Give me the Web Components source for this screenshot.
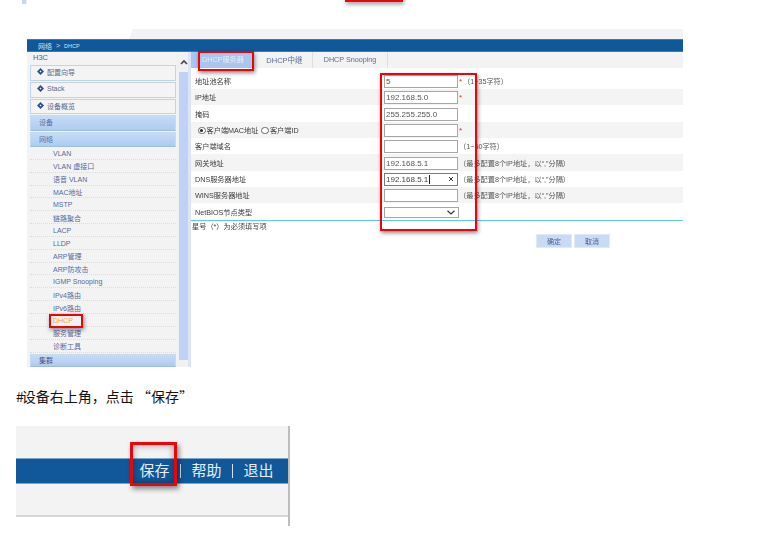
<!DOCTYPE html>
<html lang="zh">
<head>
<meta charset="utf-8">
<title>DHCP</title>
<style>
html,body{margin:0;background:#fff;width:757px;height:551px;overflow:hidden}
body{font-family:"Liberation Sans","Noto Sans CJK SC",sans-serif;font-size:7px;color:#333}
</style>
</head>
<body>
<x-strip></x-strip>
<x-router>
  <x-sidebar slot="side">
    <x-box>配置向导</x-box>
    <x-box>Stack</x-box>
    <x-box short>设备概览</x-box>
    <x-bar>设备</x-bar>
    <x-bar short>网络</x-bar>
    <x-item>VLAN</x-item>
    <x-item>VLAN 虚接口</x-item>
    <x-item>语音 VLAN</x-item>
    <x-item>MAC地址</x-item>
    <x-item>MSTP</x-item>
    <x-item>链路聚合</x-item>
    <x-item>LACP</x-item>
    <x-item>LLDP</x-item>
    <x-item>ARP管理</x-item>
    <x-item>ARP防攻击</x-item>
    <x-item>IGMP Snooping</x-item>
    <x-item>IPv4路由</x-item>
    <x-item>IPv6路由</x-item>
    <x-item active>DHCP</x-item>
    <x-item>服务管理</x-item>
    <x-item>诊断工具</x-item>
    <x-bar last>集群</x-bar>
  </x-sidebar>
  <x-tabs slot="tabs">
    <x-tab active>DHCP服务器</x-tab>
    <x-tab>DHCP中继</x-tab>
    <x-tab>DHCP Snooping</x-tab>
  </x-tabs>
  <x-row first><span slot="label">地址池名称</span><x-field>5</x-field><x-hint req>（1~35字符）</x-hint></x-row>
  <x-row alt><span slot="label">IP地址</span><x-field>192.168.5.0</x-field><x-hint req></x-hint></x-row>
  <x-row><span slot="label">掩码</span><x-field>255.255.255.0</x-field></x-row>
  <x-row alt><x-radios slot="label"></x-radios><x-field></x-field><x-hint req></x-hint></x-row>
  <x-row><span slot="label">客户端域名</span><x-field></x-field><x-hint>（1~50字符）</x-hint></x-row>
  <x-row alt><span slot="label">网关地址</span><x-field>192.168.5.1</x-field><x-hint>（最多配置8个IP地址，以“,”分隔）</x-hint></x-row>
  <x-row><span slot="label">DNS服务器地址</span><x-field focus>192.168.5.1</x-field><x-hint>（最多配置8个IP地址，以“,”分隔）</x-hint></x-row>
  <x-row alt><span slot="label">WINS服务器地址</span><x-field></x-field><x-hint>（最多配置8个IP地址，以“,”分隔）</x-hint></x-row>
  <x-row><span slot="label">NetBIOS节点类型</span><x-field select></x-field></x-row>
  <x-note>星号（*）为必须填写项</x-note>
  <x-actions><x-btn>确定</x-btn><x-btn>取消</x-btn></x-actions>
</x-router>
<x-caption><span style="letter-spacing:-2px">#</span>设备右上角，点击 “保存”</x-caption>
<x-savebar></x-savebar>

<script>
function def(name, html){
  customElements.define(name, class extends HTMLElement{
    constructor(){super();this.attachShadow({mode:'open'}).innerHTML=html;}
  });
}
const RED='position:absolute;box-sizing:border-box;border:3px solid #e8060c;box-shadow:1px 2px 4px rgba(0,0,0,.45);pointer-events:none;';

def('x-strip',`<style>
:host{display:block;position:relative;height:4px}
.a{width:4px;height:4px;margin-left:22px;background:#c9d5f3;border-right:1px solid #eee}
.r{${RED}left:345px;top:-2px;width:58px;height:4px;border-width:0 0 2px;border-color:#e8060c}
</style><div class="a"></div><div class="r"></div>`);

def('x-router',`<style>
:host{display:block;position:relative;width:656px;margin:25px 0 0 27px;filter:blur(.3px)}
.band{height:10px;background:#f3f3f3;clip-path:polygon(106px 0,100% 0,100% 100%,102px 100%)}
.crumb{box-sizing:border-box;height:13px;background:#11589a;border-top:1px solid #3d79b1;border-bottom:1px solid #3d79b1;color:#d6e2f0;display:flex;align-items:center;padding-left:11px;gap:4px;font-size:7px}
.crumb .d{font-size:5.500px}
.body{display:flex;height:315px}
.side{width:149px;flex:none;background:#f3f3f3}
.scroll{width:12px;flex:none;background:#f1f1f1;display:flex;flex-direction:column;padding:0 0 7px 3px;box-sizing:border-box}
.up{height:20px;display:flex;align-items:center;justify-content:center}
.track{flex:1;background:#bfd2f6}
.edge{width:3px;flex:none;background:#dbe5f7}
.main{flex:1;min-width:0;display:flex;flex-direction:column}
.o{${RED}}
.o1{left:171px;top:21.500px;width:56px;height:20.500px;border-width:2.500px}
.o2{left:353px;top:44px;width:97px;height:158px;border-width:2.800px}
.o3{left:22px;top:285px;width:34px;height:14px;border-width:2.500px}
</style>
<div class="band"></div>
<div class="crumb"><span>网络</span><span>&gt;</span><span class="d">DHCP</span></div>
<div class="body">
  <div class="side"><slot name="side"></slot></div>
  <div class="scroll"><div class="up"><svg width="8" height="6" viewBox="0 0 8 6"><path d="M1 5 L4 2 L7 5" fill="none" stroke="#445" stroke-width="1.6"/></svg></div><div class="track"></div></div>
  <div class="edge"></div>
  <div class="main"><slot name="tabs"></slot><slot></slot></div>
</div>
<div class="o o1"></div><div class="o o2"></div><div class="o o3"></div>`);

def('x-sidebar',`<style>
:host{display:flex;flex-direction:column;height:100%;padding:0 0 0 3px;box-sizing:border-box;color:#4d6196}
.h{height:13px;line-height:12px;padding-left:3px;font-size:7.5px}
</style><div class="h">H3C</div><slot></slot>`);

def('x-box',`<style>
:host{display:flex;align-items:center;box-sizing:border-box;height:16px;margin-bottom:1px;border:1px solid #c0d4ea;background:#f4f4f4;color:#5a6a92;padding:0 0 3px 6px;gap:4px}
:host([short]){height:15px;padding-bottom:2px}
svg{flex:none}
</style><svg width="7" height="7" viewBox="0 0 7 7"><path d="M3.5 0 L7 3.5 L3.5 7 L0 3.5 Z M3.5 2.5 L2.5 3.5 L3.5 4.5 L4.5 3.5 Z" fill="#2f4f8c" fill-rule="evenodd"/></svg><span style="margin-left:-1px"><slot></slot></span>`);

def('x-bar',`<style>
:host{display:flex;align-items:center;box-sizing:border-box;height:16px;margin-bottom:1px;padding:0 0 3px 8px;background:linear-gradient(#c6dcf6,#aecbef);border:1px solid #c6daf0;border-bottom:1px solid #9dbce4;color:#5b72a6}
:host([short]){height:15px;margin-bottom:0;padding-bottom:2px}
:host([last]){height:13px;margin:1px 0 0;padding-bottom:0;color:#3f5688}
</style><slot></slot>`);

def('x-item',`<style>
:host{display:flex;align-items:center;box-sizing:border-box;height:12.85px;padding:1px 0 0 23px;border-bottom:1px dotted #dcdcdc;color:#566a9c}
:host([active]){color:#f2a33c}
</style><slot></slot>`);

def('x-tabs',`<style>
:host{display:flex;height:16px;background:#f3f3f3}
</style><slot></slot>`);

def('x-tab',`<style>
:host{display:flex;align-items:center;justify-content:center;height:16px;padding:0 0 2px;box-sizing:border-box;border-right:1px solid #dedede;color:#566a9c;font-size:7.5px;width:61px}
:host([active]){background:#a9c6ee;color:#e6edf8;border:0;padding-left:3px;font-size:7.2px}
:host(:nth-child(2)){padding-left:5px}
:host(:nth-child(3)){width:75px;font-size:7.2px}
</style><slot></slot>`);

def('x-row',`<style>
:host{display:flex;align-items:flex-end;box-sizing:border-box;height:16.33px;padding-bottom:1px}
:host([first]){height:21px}
:host([alt]){background:#f4f4f4}
.l{width:193px;flex:none;padding-left:4px;box-sizing:border-box;height:13px;line-height:13px;color:#3a3a3a;font-size:7.2px;white-space:nowrap}
</style><div class="l"><slot name="label"></slot></div><slot></slot>`);

def('x-field',`<style>
:host{display:flex;align-items:center;box-sizing:border-box;width:74px;height:13px;flex:none;border:1px solid #a6a6a6;background:#fff;padding-left:1px;font-size:8px;color:#555;position:relative}
:host([focus]){border-color:#7a7a7a;color:#444}
:host([select]){width:75px;height:11.5px;margin-bottom:.5px}
.c{display:none;width:1px;height:9px;background:#222;margin-left:.5px}
:host([focus]) .c{display:block}
.x,.v{display:none;margin-left:auto;margin-right:3px}
:host([focus]) .x{display:block}
:host([select]) .v{display:block}
</style><slot></slot><i class="c"></i>
<svg class="x" width="6" height="6" viewBox="0 0 6 6"><path d="M1 1 L5 5 M5 1 L1 5" stroke="#333" stroke-width="1"/></svg>
<svg class="v" width="8" height="5" viewBox="0 0 8 5"><path d="M.5 .8 L4 4 L7.500 .8" fill="none" stroke="#333" stroke-width="1.200"/></svg>`);

def('x-hint',`<style>
:host{display:flex;height:13px;line-height:13px;color:#555;font-size:7.2px;white-space:nowrap}
b{display:none;color:#d9342c;font-weight:400;width:3px;padding-left:1px;font-size:8px}
:host([req]) b{display:block}
.t{margin-left:1px}
</style><b>*</b><span class="t"><slot></slot></span>`);

def('x-radios',`<style>
:host{display:flex;align-items:center;height:13px;padding-left:3px}
i{width:5.500px;height:5.500px;border:.8px solid #666;border-radius:50%;background:#fff;flex:none;position:relative}
i.on::after{content:"";position:absolute;inset:1.200px;background:#222;border-radius:50%}
span{margin:0 1px}
i.off{margin-left:2px}
</style><i class="on"></i><span>客户端MAC地址</span><i class="off"></i><span>客户端ID</span>`);

def('x-note',`<style>
:host{display:block;border-top:1px solid #63c3fb;height:13px;line-height:11px;padding-left:1px;color:#444;font-size:7.2px}
</style><slot></slot>`);

def('x-actions',`<style>
:host{display:flex;gap:2px;padding-left:345px}
</style><slot></slot>`);

def('x-btn',`<style>
:host{display:flex;align-items:center;justify-content:center;box-sizing:border-box;width:36px;height:14px;background:#c8daf4;border:1px solid #e3e9f4;color:#4a5f96;font-size:7px}
</style><slot></slot>`);

def('x-caption',`<style>
:host{display:block;margin:19px 0 0 16px;height:20px;line-height:20px;font-size:14px;color:#111;white-space:nowrap;font-family:"Noto Sans CJK SC",sans-serif}
</style><slot></slot>`);

def('x-savebar',`<style>
:host{display:block;position:relative;box-sizing:border-box;width:273.500px;height:100px;margin:20px 0 0 16px;border-right:2px solid #bdbdbd;font-family:"Noto Sans CJK SC",sans-serif}
.g{height:91px;box-sizing:border-box;background:#f3f3f3;border-bottom:2px solid #d6d6d6;padding-top:32px}
.b{height:26px;box-sizing:border-box;background:#11589a;border-top:1px solid #7fa4c8;border-bottom:1px solid #7fa4c8;display:flex;align-items:center;justify-content:flex-end;padding:0 14px 3px 0;color:#e7eef6;font-size:15px;gap:10.500px;line-height:1}
s{width:1px;height:14px;background:#d5e2ee;display:block;margin-top:3px}
.o{${RED}left:114px;top:16px;width:47px;height:44px;box-shadow:2px 3px 5px rgba(0,0,0,.45),inset 0 0 7px rgba(0,0,0,.4)}
</style><div class="g"><div class="b"><span>保存</span><s></s><span>帮助</span><s></s><span>退出</span></div></div><div class="o"></div>`);
</script>
</body>
</html>
